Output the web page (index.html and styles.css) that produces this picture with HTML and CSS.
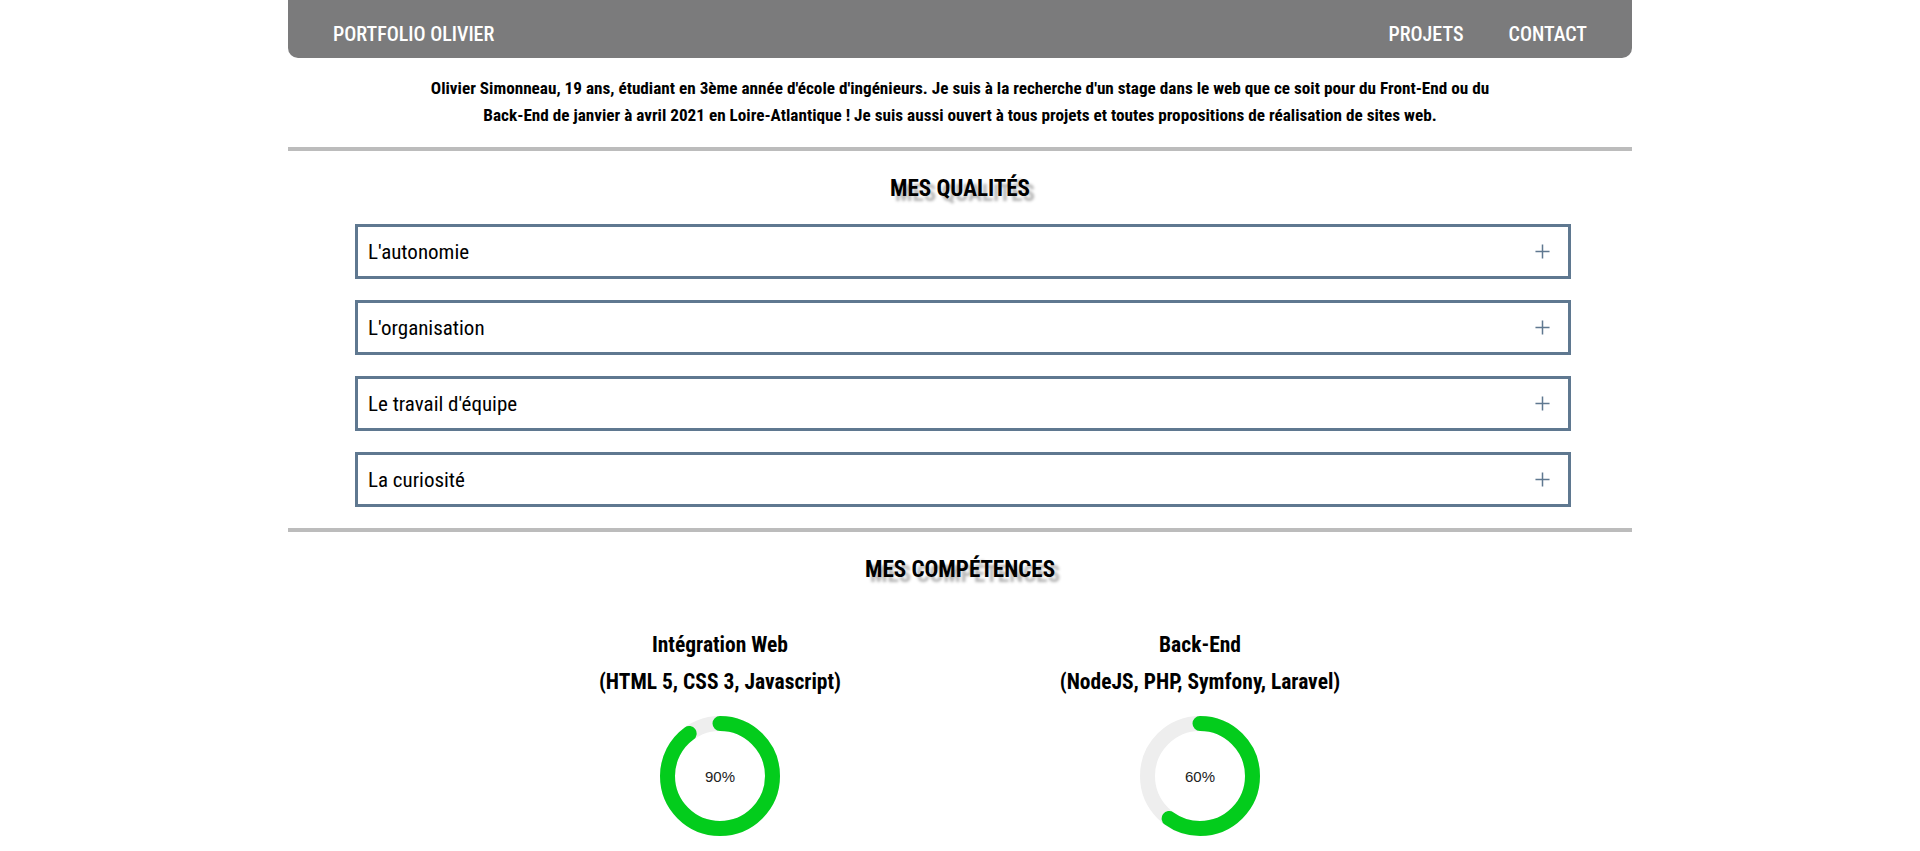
FILE: index.html
```html
<!DOCTYPE html>
<html lang="fr">
<head>
<meta charset="utf-8">
<title>Portfolio Olivier</title>
<link rel="stylesheet" href="styles.css">
</head>
<body>
<div class="container">
  <header class="topbar">
    <a class="brand" href="#">PORTFOLIO OLIVIER</a>
    <nav class="nav">
      <a href="#projets">PROJETS</a>
      <a href="#contact">CONTACT</a>
    </nav>
  </header>

  <p class="intro">Olivier Simonneau, 19 ans, étudiant en 3ème année d'école d'ingénieurs. Je suis à la recherche d'un stage dans le web que ce soit pour du Front-End ou du<br>Back-End de janvier à avril 2021 en Loire-Atlantique ! Je suis aussi ouvert à tous projets et toutes propositions de réalisation de sites web.</p>

  <hr class="sep">

  <section class="qualities">
    <h2 class="title">MES QUALITÉS</h2>
    <div class="acc-list">
      <div class="acc-item"><span>L'autonomie</span><svg class="plus" viewBox="0 0 16 16"><path d="M8 0.5V15.5M0.5 8H15.5"/></svg></div>
      <div class="acc-item"><span>L'organisation</span><svg class="plus" viewBox="0 0 16 16"><path d="M8 0.5V15.5M0.5 8H15.5"/></svg></div>
      <div class="acc-item"><span>Le travail d'équipe</span><svg class="plus" viewBox="0 0 16 16"><path d="M8 0.5V15.5M0.5 8H15.5"/></svg></div>
      <div class="acc-item"><span>La curiosité</span><svg class="plus" viewBox="0 0 16 16"><path d="M8 0.5V15.5M0.5 8H15.5"/></svg></div>
    </div>
  </section>

  <hr class="sep">

  <section class="skills">
    <h2 class="title">MES COMPÉTENCES</h2>
    <div class="skill-grid">
      <div class="skill">
        <h3 class="skill-name">Intégration Web<br>(HTML 5, CSS 3, Javascript)</h3>
        <div class="ring">
          <svg viewBox="0 0 120 120">
            <circle class="track" cx="60" cy="60" r="52.5"/>
            <circle class="bar" cx="60" cy="60" r="52.5" pathLength="100" style="stroke-dasharray: 90 100"/>
          </svg>
          <span class="pct">90%</span>
        </div>
      </div>
      <div class="skill">
        <h3 class="skill-name">Back-End<br>(NodeJS, PHP, Symfony, Laravel)</h3>
        <div class="ring">
          <svg viewBox="0 0 120 120">
            <circle class="track" cx="60" cy="60" r="52.5"/>
            <circle class="bar" cx="60" cy="60" r="52.5" pathLength="100" style="stroke-dasharray: 60 100"/>
          </svg>
          <span class="pct">60%</span>
        </div>
      </div>
    </div>
  </section>
</div>
</body>
</html>
```
FILE: styles.css
```css
html, body {
  margin: 0;
  padding: 0;
  background: #fff;
  color: #000;
  font-family: "Roboto Condensed", "Open Sans", "Liberation Sans", sans-serif;
}

.container {
  width: 70%;
  margin: 0 auto;
  padding-bottom: 60px;
}

.topbar {
  height: 58px;
  background: #7b7b7c;
  border-radius: 0 0 10px 10px;
  display: flex;
  align-items: center;
  justify-content: space-between;
  padding: 10px 45px 0 45px;
  box-sizing: border-box;
}

.topbar a {
  color: #fff;
  text-decoration: none;
  font-size: 20px;
  font-weight: 500;
}

.nav {
  display: flex;
  gap: 45px;
}

.intro {
  margin: 17px 0 0;
  text-align: center;
  font-weight: 700;
  font-size: 17.2px;
  line-height: 27px;
}

.sep {
  margin: 18px 0 0;
  border: 0;
  border-top: 4px solid #bcbcbc;
  height: 0;
}

.title {
  margin: 20px 0 0;
  text-align: center;
  font-size: 23px;
  line-height: 36px;
  font-weight: 700;
  text-shadow: 5px 5px 3px #b5b5b5;
}

.acc-list {
  display: flex;
  flex-direction: column;
  gap: 21px;
  margin: 17px 61px 21px 67px;
}

.acc-item {
  height: 55px;
  box-sizing: border-box;
  border: 3px solid #5f7890;
  display: flex;
  align-items: center;
  justify-content: space-between;
  padding: 0 18px 0 10px;
  font-size: 21px;
}

.plus {
  width: 15px;
  height: 15px;
  fill: none;
  stroke: #5f7890;
  stroke-width: 1.6;
}

.skill-grid {
  display: grid;
  grid-template-columns: 1fr 1fr;
  margin: 38px 192px 0;
}

.skill {
  display: flex;
  flex-direction: column;
  align-items: center;
}

.skill-name {
  margin: 0;
  text-align: center;
  font-size: 21.5px;
  line-height: 37px;
  font-weight: 700;
}

.ring {
  position: relative;
  width: 120px;
  height: 120px;
  margin-top: 16px;
}

.ring svg {
  width: 120px;
  height: 120px;
  transform: rotate(-90deg);
}

.track {
  fill: none;
  stroke: #eeeeee;
  stroke-width: 15;
}

.bar {
  fill: none;
  stroke: #03cc1c;
  stroke-width: 15;
  stroke-linecap: round;
}

.pct {
  position: absolute;
  inset: 0;
  display: flex;
  align-items: center;
  justify-content: center;
  font-family: "Liberation Sans", Arial, sans-serif;
  font-size: 15px;
  color: #222;
}
```
